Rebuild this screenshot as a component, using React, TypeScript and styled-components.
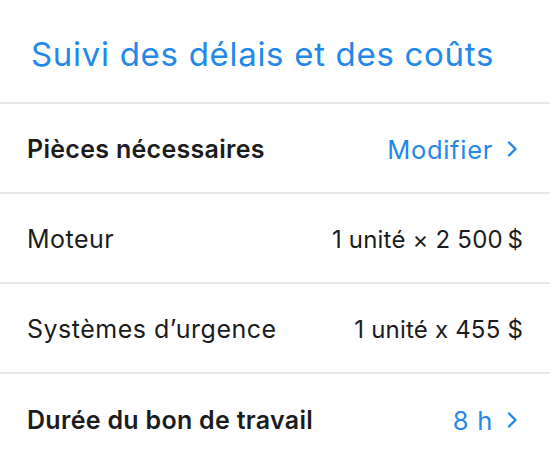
import styled, { createGlobalStyle } from "styled-components";

interface Row {
  label: string;
  value: string;
  strong?: boolean;
  link?: boolean;
}

const rows: Row[] = [
  { label: "Pièces nécessaires", value: "Modifier", strong: true, link: true },
  { label: "Moteur", value: "1 unité × 2 500\u202F$" },
  { label: "Systèmes d’urgence", value: "1 unité x 455 $" },
  { label: "Durée du bon de travail", value: "8 h", strong: true, link: true },
];

function Chevron() {
  return (
    <svg width="12" height="20" viewBox="0 0 12 20" fill="none">
      <path
        d="M3 3.5l6.5 6.5-6.5 6.5"
        stroke="#1e88ea"
        strokeWidth="2.4"
        strokeLinecap="round"
        strokeLinejoin="round"
      />
    </svg>
  );
}

function App() {
  return (
    <>
      <GlobalStyle />
      <Sheet>
        <Header>
          <Title>Suivi des délais et des coûts</Title>
        </Header>
        {rows.map((row, index) => (
          <ListRow key={index}>
            <Label $strong={row.strong}>{row.label}</Label>
            {row.link ? (
              <Action>
                <LinkText>{row.value}</LinkText>
                <Chevron />
              </Action>
            ) : (
              <Value>{row.value}</Value>
            )}
          </ListRow>
        ))}
      </Sheet>
    </>
  );
}

const GlobalStyle = createGlobalStyle`
  body {
    margin: 0;
    background: #ffffff;
    font-family: Inter, "Noto Sans", sans-serif;
  }
`;

const Sheet = styled.div`
  width: 550px;
  display: flex;
  flex-direction: column;
`;

const Header = styled.div`
  height: 104px;
  display: flex;
  align-items: center;
  padding: 5px 31px 0;
  border-bottom: 2px solid #e8e8e8;
  box-sizing: border-box;
`;

const Title = styled.h1`
  margin: 0;
  font-size: 33px;
  font-weight: 400;
  color: #2388ea;
  letter-spacing: 0.7px;
`;

const ListRow = styled.div`
  height: 90px;
  display: flex;
  align-items: center;
  justify-content: space-between;
  padding: 2px 27px 0;
  border-bottom: 2px solid #e8e8e8;
  box-sizing: border-box;

  &:last-child {
    border-bottom: none;
  }
`;

const Label = styled.span<{ $strong?: boolean }>`
  font-size: 25px;
  font-weight: ${(props) => (props.$strong ? 600 : 400)};
  letter-spacing: ${(props) => (props.$strong ? "0.3px" : "0.5px")};
  color: #1c1c1e;
`;

const Value = styled.span`
  font-size: 24px;
  letter-spacing: 0.2px;
  color: #1c1c1e;
`;

const Action = styled.div`
  display: flex;
  align-items: center;
  gap: 13px;
  padding-right: 5px;
`;

const LinkText = styled.span`
  font-size: 25.5px;
  letter-spacing: 0.7px;
  color: #2388ea;
`;

export default App;
